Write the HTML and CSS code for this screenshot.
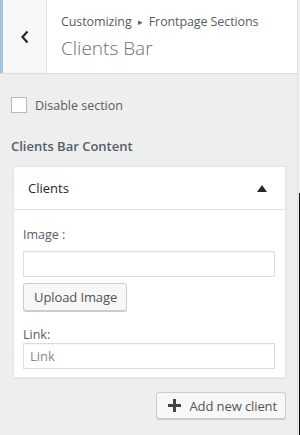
FILE: index.html
```html
<!DOCTYPE html>
<html>
<head>
<meta charset="utf-8">
<link rel="stylesheet" href="styles.css">
</head>
<body>
<div class="panel">
  <div class="header">
    <div class="back">
      <svg width="10" height="14" viewBox="0 0 10 14"><path d="M7.5 1.5 L2.5 7 L7.5 12.5" fill="none" stroke="#23282d" stroke-width="2.2"/></svg>
    </div>
    <div class="titles">
      <div class="crumb">Customizing <span class="arrow">&#9656;</span> Frontpage Sections</div>
      <div class="title">Clients Bar</div>
    </div>
  </div>
  <div class="content">
    <label class="check"><span class="box"></span><span>Disable section</span></label>
    <div class="section-title">Clients Bar Content</div>
    <div class="card">
      <div class="card-head"><span>Clients</span><span class="tri"></span></div>
      <div class="card-body">
        <div class="label">Image :</div>
        <div class="input"></div>
        <div class="btn upload">Upload Image</div>
        <div class="label link-label">Link:</div>
        <div class="input placeholder">Link</div>
      </div>
    </div>
    <div class="actions">
      <div class="btn add"><svg width="13" height="13" viewBox="0 0 13 13"><path d="M5 0h3v5h5v3H8v5H5V8H0V5h5z" fill="#444"/></svg><span>Add new client</span></div>
    </div>
  </div>
</div>
</body>
</html>
```
FILE: styles.css
```css
html, body {
  margin: 0;
  padding: 0;
}
body {
  position: relative;
  width: 300px;
  height: 435px;
  background: #eeeeee;
  font-family: "Open Sans", "Noto Sans", sans-serif;
  color: #555d66;
  overflow: hidden;
}
body::after {
  content: "";
  position: absolute;
  right: 0;
  top: 193px;
  bottom: 0;
  width: 1px;
  background: #111;
}
.panel {
  width: 297px;
  height: 435px;
  border-right: 1px solid #e2e2e2;
}
.header {
  display: flex;
  height: 73px;
  background: #fff;
  border-bottom: 1px solid #dddddd;
}
.back {
  width: 43px;
  border-left: 3px solid #9fc6e4;
  border-right: 1px solid #e4e4e4;
  background: #f7f7f7;
  display: flex;
  align-items: center;
  justify-content: center;
}
.titles {
  padding: 12px 0 0 14px;
}
.crumb {
  font-size: 12.5px;
  line-height: 20px;
  color: #555d66;
  letter-spacing: -0.1px;
}
.arrow {
  font-size: 9px;
  vertical-align: 1px;
  margin: 0 3px;
}
.title {
  font-size: 19px;
  font-weight: 300;
  line-height: 26px;
  margin-top: 3px;
  color: #6c7074;
}
.content {
  padding: 22px 11px 0 11px;
}
.check {
  display: flex;
  align-items: center;
  gap: 8px;
  font-size: 12.5px;
  color: #555d66;
  height: 18px;
}
.box {
  width: 14px;
  height: 14px;
  background: #fff;
  border: 1px solid #b4b9be;
}
.section-title {
  margin-top: 22px;
  font-size: 13px;
  font-weight: 600;
  color: #555d66;
  line-height: 20px;
}
.card {
  margin: 10px 0 0 2px;
  background: #fff;
  border: 1px solid #e8e8e8;
  box-shadow: 0 1px 2px rgba(0,0,0,0.06);
}
.card-head {
  display: flex;
  justify-content: space-between;
  align-items: center;
  height: 42px;
  padding: 0 18px 0 14px;
  border-bottom: 1px solid #e2e2e2;
  font-size: 13px;
  color: #23282d;
}
.tri {
  width: 0;
  height: 0;
  border-left: 5px solid transparent;
  border-right: 5px solid transparent;
  border-bottom: 7px solid #23282d;
}
.card-body {
  padding: 15px 10px 8px 9px;
}
.label {
  font-size: 12.5px;
  line-height: 20px;
  color: #555d66;
}
.input {
  margin-top: 6px;
  height: 24px;
  border: 1px solid #dddddd;
  background: #fff;
  box-shadow: inset 0 1px 1px rgba(0,0,0,0.04);
  font-size: 13px;
  line-height: 24px;
  padding-left: 6px;
}
.placeholder {
  margin-top: 0;
  color: #888;
}
.btn {
  display: inline-flex;
  align-items: center;
  border: 1px solid #cccccc;
  border-radius: 3px;
  background: #f7f7f7;
  box-shadow: 0 1px 0 #cccccc;
  color: #555;
  font-size: 13px;
}
.upload {
  margin-top: 6px;
  height: 26px;
  padding: 0 9px 0 10px;
  letter-spacing: -0.1px;
}
.link-label {
  margin-top: 16px;
  line-height: 16px;
}
.actions {
  display: flex;
  justify-content: flex-end;
  margin-top: 14px;
}
.add {
  height: 25px;
  padding: 0 8px 0 11px;
  gap: 8px;
  letter-spacing: -0.1px;
}
```
